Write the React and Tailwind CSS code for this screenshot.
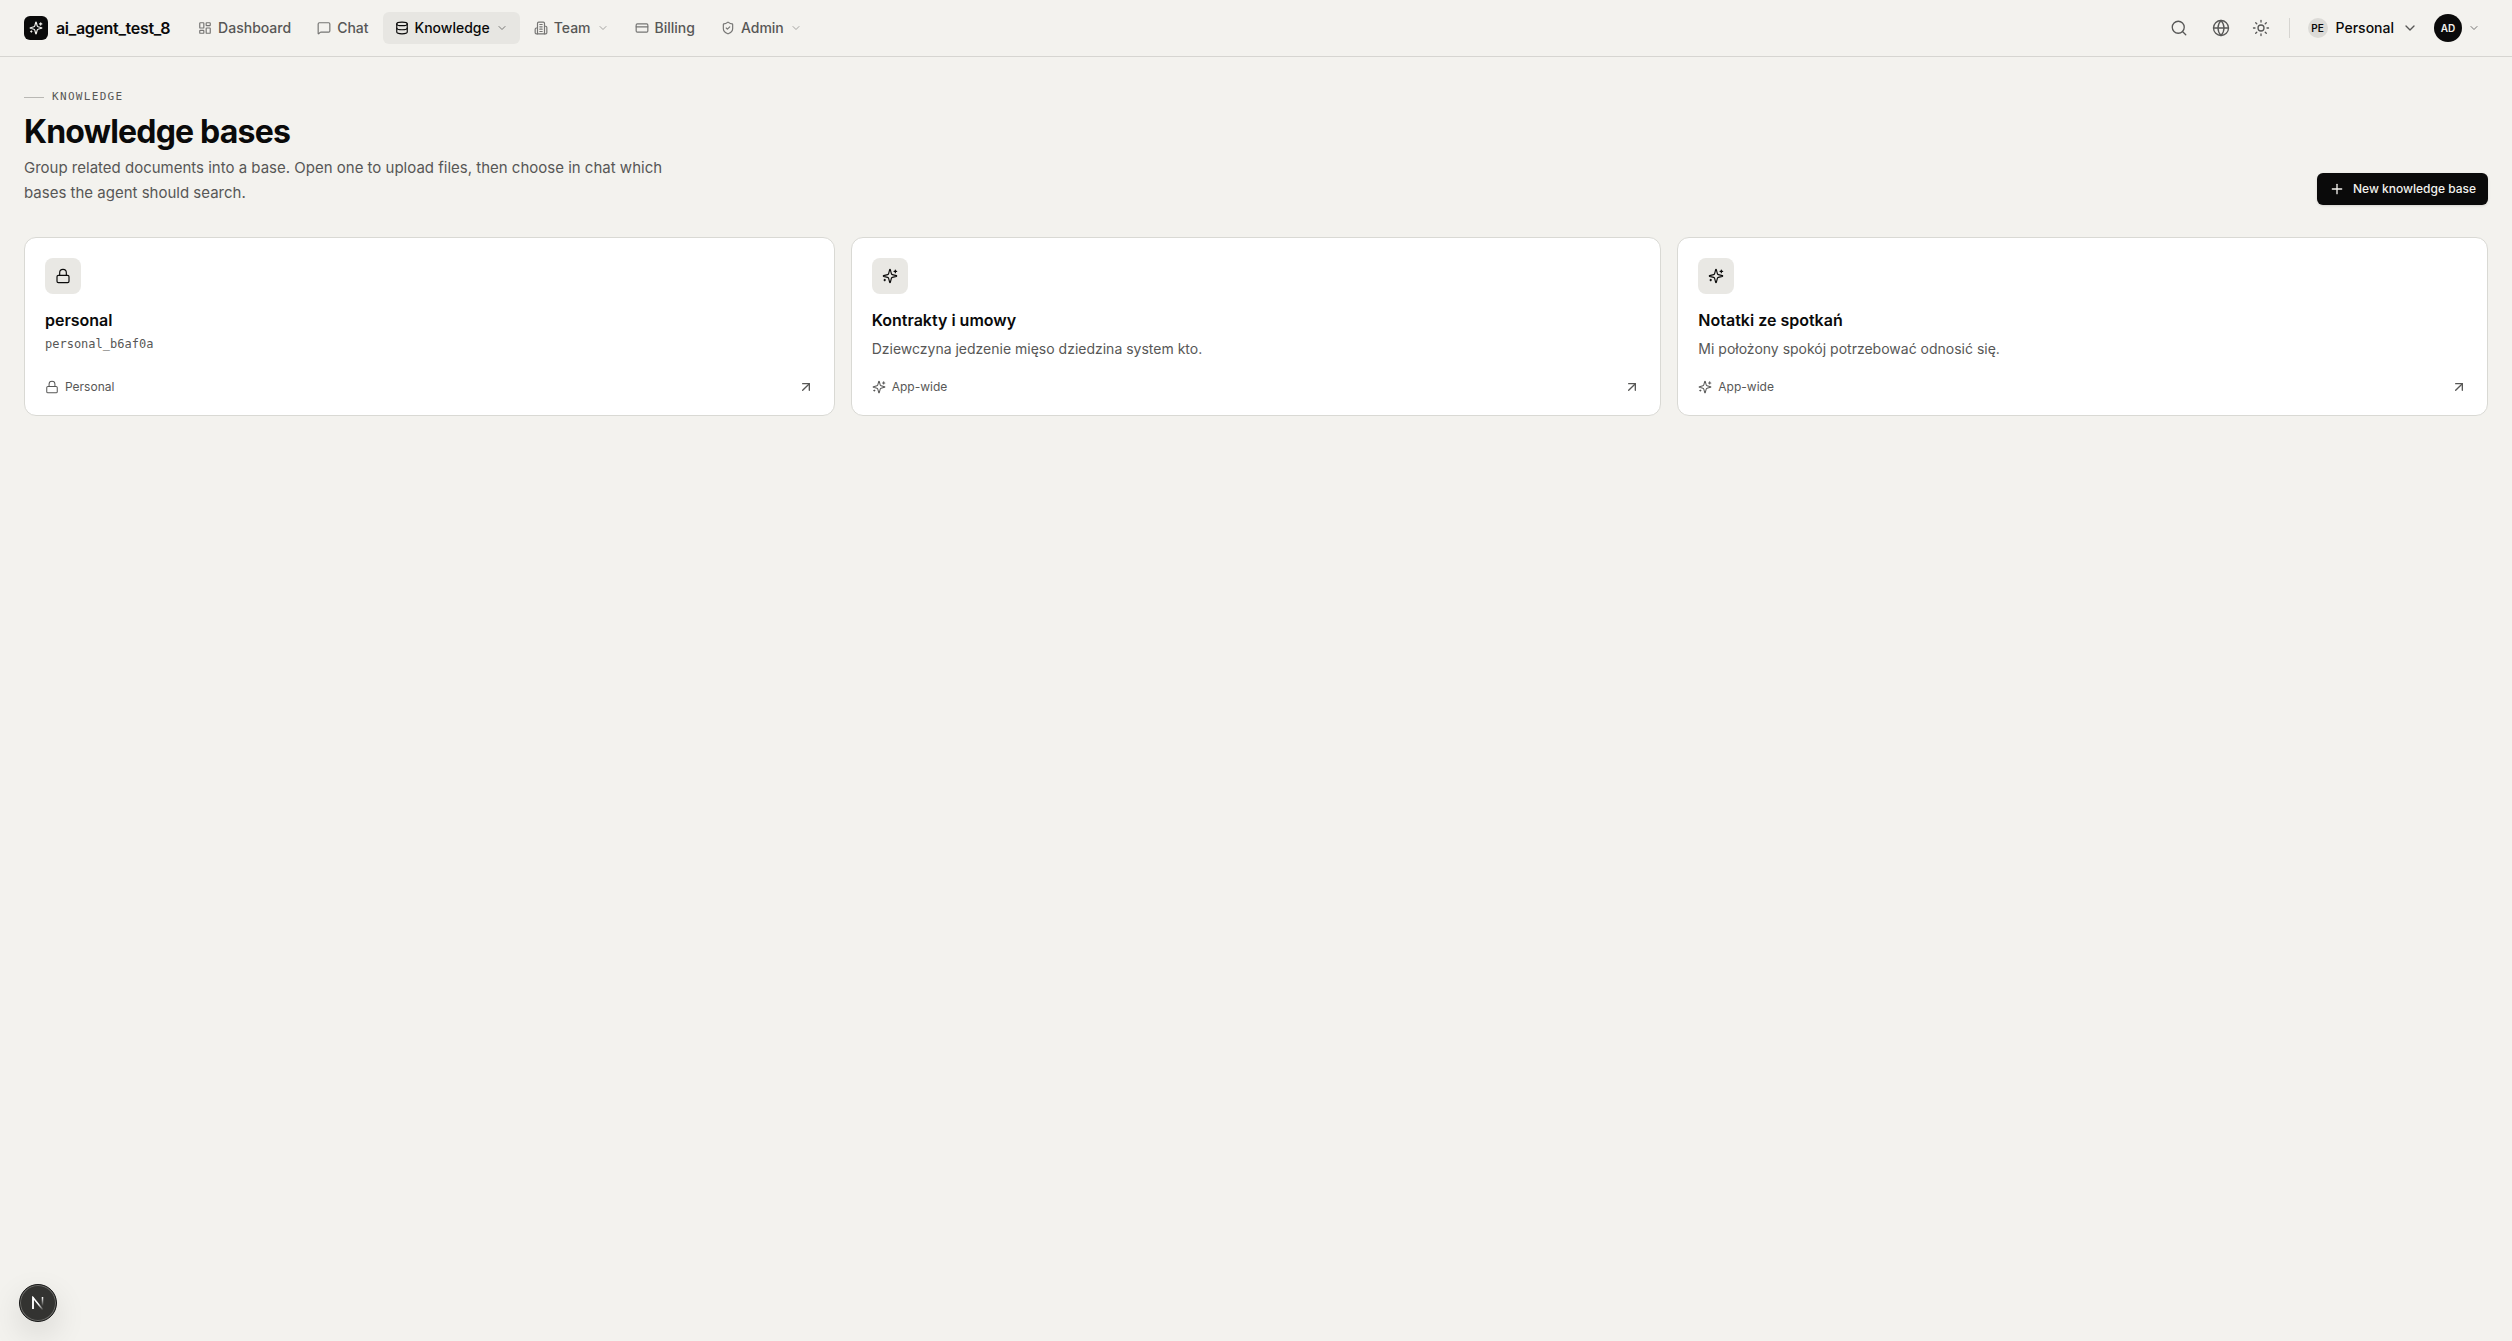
// App.jsx: knowledge bases overview with top navigation
import {
  ArrowUpRight,
  ChevronDown,
  CreditCard,
  Database,
  Globe,
  LayoutDashboard,
  Lock,
  MessageSquare,
  Plus,
  Search,
  ShieldCheck,
  Sun,
} from 'lucide-react'

// custom icons, same props as the lucide ones
function StrokeIcon({ size = 24, strokeWidth = 2, className = '', children }) {
  return (
    <svg
      width={size}
      height={size}
      viewBox="0 0 24 24"
      fill="none"
      stroke="currentColor"
      strokeWidth={strokeWidth}
      strokeLinecap="round"
      strokeLinejoin="round"
      className={className}
      aria-hidden="true"
    >
      {children}
    </svg>
  )
}

function Sparkles(props) {
  return (
    <StrokeIcon {...props}>
      <path d="M9.937 15.5A2 2 0 0 0 8.5 14.063l-6.135-1.582a.5.5 0 0 1 0-.962L8.5 9.936A2 2 0 0 0 9.937 8.5l1.582-6.135a.5.5 0 0 1 .963 0L14.063 8.5A2 2 0 0 0 15.5 9.937l6.135 1.581a.5.5 0 0 1 0 .964L15.5 14.063a2 2 0 0 0-1.437 1.437l-1.582 6.135a.5.5 0 0 1-.963 0z" />
      <path d="M20 3v4" />
      <path d="M22 5h-4" />
      <path d="M4 17v2" />
      <path d="M5 18H3" />
    </StrokeIcon>
  )
}

function Building(props) {
  return (
    <StrokeIcon {...props}>
      <path d="M6 22V4a2 2 0 0 1 2-2h8a2 2 0 0 1 2 2v18Z" />
      <path d="M6 12H4a2 2 0 0 0-2 2v6a2 2 0 0 0 2 2h2" />
      <path d="M18 9h2a2 2 0 0 1 2 2v9a2 2 0 0 1-2 2h-2" />
      <path d="M10 6h4" />
      <path d="M10 10h4" />
      <path d="M10 14h4" />
      <path d="M10 18h4" />
    </StrokeIcon>
  )
}

const navItems = [
  { label: 'Dashboard', icon: LayoutDashboard },
  { label: 'Chat', icon: MessageSquare },
  { label: 'Knowledge', icon: Database, menu: true, active: true },
  { label: 'Team', icon: Building, menu: true },
  { label: 'Billing', icon: CreditCard },
  { label: 'Admin', icon: ShieldCheck, menu: true },
]

const bases = [
  { name: 'personal', slug: 'personal_b6af0a', scope: 'Personal', icon: Lock },
  {
    name: 'Kontrakty i umowy',
    description: 'Dziewczyna jedzenie mięso dziedzina system kto.',
    scope: 'App-wide',
    icon: Sparkles,
  },
  {
    name: 'Notatki ze spotkań',
    description: 'Mi położony spokój potrzebować odnosić się.',
    scope: 'App-wide',
    icon: Sparkles,
  },
]

function NavItem({ item }) {
  const Icon = item.icon
  const look = item.active ? 'bg-[#e7e6e2] text-[#0a0a0a]' : 'text-[#575756]'
  const className = `flex h-8 items-center gap-1.5 rounded-md px-3 text-sm font-medium ${look}`
  const content = (
    <>
      <Icon size={14} className={item.active ? '' : 'opacity-80'} />
      {item.label}
      {item.menu && <ChevronDown size={12} className="opacity-50" />}
    </>
  )

  if (item.menu) {
    return <button type="button" className={className}>{content}</button>
  }
  return <a href="#" className={className}>{content}</a>
}

function IconButton({ label, icon: Icon }) {
  return (
    <button type="button" aria-label={label} className="flex size-9 items-center justify-center rounded-md text-[#575756]">
      <Icon size={18} strokeWidth={1.75} />
    </button>
  )
}

function Header() {
  return (
    <header className="flex h-[57px] items-center justify-between border-b border-[#d6d5d1] px-6">
      <div className="flex items-center gap-4">
        <a href="#" className="flex items-center gap-2">
          <span className="flex size-6 items-center justify-center rounded-md bg-[#0a0a0a] text-[#f3f2ee]">
            <Sparkles size={14} />
          </span>
          <span className="text-base font-semibold tracking-[-0.02em]">ai_agent_test_8</span>
        </a>
        <nav className="flex items-center gap-0.5">
          {navItems.map((item) => (
            <NavItem key={item.label} item={item} />
          ))}
        </nav>
      </div>

      <div className="flex items-center">
        <div className="flex items-center gap-1">
          <div className="mr-0.5">
            <IconButton label="Search" icon={Search} />
          </div>
          <IconButton label="Language" icon={Globe} />
          <IconButton label="Theme" icon={Sun} />
        </div>
        <div className="mx-2.5 h-5 w-px bg-[#d6d5d1]" />
        <button type="button" className="flex h-8 items-center gap-2 rounded-md px-2 text-sm font-medium">
          <span className="flex size-5 items-center justify-center rounded-full bg-[#dcdbd7] text-[10px] font-semibold">PE</span>
          Personal
          <ChevronDown size={16} className="text-[#575756]" />
        </button>
        <button type="button" className="flex items-center gap-1.5 px-2 text-[#575756]">
          <span className="flex size-7 items-center justify-center rounded-full bg-[#0a0a0a] text-[10px] font-semibold text-[#f3f2ee]">AD</span>
          <ChevronDown size={12} className="opacity-80" />
        </button>
      </div>
    </header>
  )
}

function BaseCard({ base }) {
  const Icon = base.icon
  return (
    <a href="#" className="flex flex-col rounded-xl border border-[#d9d9d4] bg-white p-5">
      <span className="flex size-9 items-center justify-center rounded-lg bg-[#e9e8e4]">
        <Icon size={16} strokeWidth={1.75} />
      </span>
      <h2 className="mt-4 text-base leading-5 font-semibold">{base.name}</h2>
      {base.slug && (
        <p className="mt-1.5 font-['DejaVu_Sans_Mono',monospace] text-xs leading-4 text-[#575756]">{base.slug}</p>
      )}
      {base.description && (
        <p className="mt-2 text-sm leading-[21px] text-[#575756]">{base.description}</p>
      )}
      <div className="mt-auto flex items-center justify-between pt-5 text-xs text-[#575756]">
        <span className="flex items-center gap-1.5">
          <Icon size={14} strokeWidth={1.75} />
          {base.scope}
        </span>
        <ArrowUpRight size={16} />
      </div>
    </a>
  )
}

// floating dev tools badge in the corner
function DevBadge() {
  return (
    <button
      type="button"
      aria-label="Open dev tools"
      className="fixed bottom-[19px] left-[19px] flex size-[38px] items-center justify-center rounded-full border border-[#171717] bg-[#333331] shadow-[0_12px_32px_rgba(0,0,0,0.12)] ring-1 ring-[#6b6b68] ring-inset"
    >
      <svg width="14" height="14" viewBox="0 0 14 14" fill="none">
        <defs>
          <linearGradient id="diag" x1="8" y1="8" x2="12" y2="14" gradientUnits="userSpaceOnUse">
            <stop stopColor="#fff" />
            <stop offset="1" stopColor="#fff" stopOpacity="0" />
          </linearGradient>
          <linearGradient id="stem" x1="11" y1="1" x2="11" y2="10" gradientUnits="userSpaceOnUse">
            <stop stopColor="#fff" />
            <stop offset="1" stopColor="#fff" stopOpacity="0" />
          </linearGradient>
        </defs>
        <path d="M2 13V1.5L12 14" stroke="url(#diag)" strokeWidth="1.5" />
        <path d="M2 13V1" stroke="#fff" strokeWidth="1.5" />
        <path d="M11.5 1v9" stroke="url(#stem)" strokeWidth="1.5" />
      </svg>
    </button>
  )
}

export default function App() {
  return (
    <div className="min-h-screen bg-[#f3f2ee] font-['Inter',sans-serif] text-[#0a0a0a]">
      <Header />
      <main className="flex flex-col gap-8 px-6 py-8">
        <div className="flex items-end justify-between">
          <div>
            <p className="flex items-center gap-2 font-['DejaVu_Sans_Mono',monospace] text-[11px] leading-4 tracking-[0.12em] text-[#575756] uppercase">
              <span className="h-px w-5 bg-[#b9b8b4]" />
              Knowledge
            </p>
            <h1 className="mt-2 text-[32px] leading-[38px] font-bold tracking-tight">Knowledge bases</h1>
            <p className="mt-1 max-w-2xl text-[15px] leading-[25px] text-[#575756]">
              Group related documents into a base. Open one to upload files, then choose in chat which bases the agent
              should search.
            </p>
          </div>
          <button
            type="button"
            className="flex h-8 items-center gap-2 rounded-md bg-[#0a0a0a] px-3 text-xs font-medium text-[#f3f2ee] shadow-sm"
          >
            <Plus size={16} />
            New knowledge base
          </button>
        </div>
        <div className="grid grid-cols-3 gap-4">
          {bases.map((base) => (
            <BaseCard key={base.name} base={base} />
          ))}
        </div>
      </main>
      <DevBadge />
    </div>
  )
}
